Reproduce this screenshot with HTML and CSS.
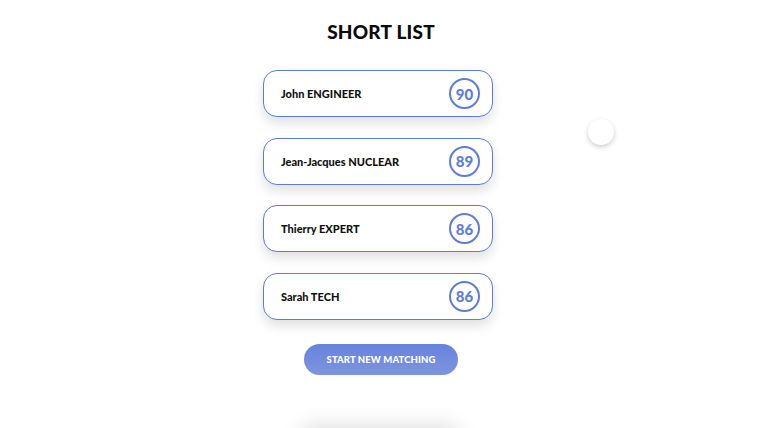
FILE: index.html
```html
<!DOCTYPE html>
<html>
<head>
<meta charset="utf-8">
<link rel="stylesheet" href="styles.css">
</head>
<body>
<main class="page">
  <h1 class="title">SHORT LIST</h1>
  <ul class="list">
    <li class="card"><span class="name">John ENGINEER</span><span class="score">90</span></li>
    <li class="card"><span class="name">Jean-Jacques NUCLEAR</span><span class="score">89</span></li>
    <li class="card"><span class="name">Thierry EXPERT</span><span class="score">86</span></li>
    <li class="card"><span class="name">Sarah TECH</span><span class="score">86</span></li>
  </ul>
  <button class="cta">START NEW MATCHING</button>
</main>
<div class="toggle"></div>
<div class="peek"><div class="peek-card"></div></div>
</body>
</html>
```
FILE: styles.css
```css
html, body {
  margin: 0;
  padding: 0;
  background: #ffffff;
  width: 762px;
  height: 428px;
  overflow: hidden;
  position: relative;
  font-family: "Lato", "DejaVu Sans", sans-serif;
}
.page {
  display: flex;
  flex-direction: column;
  align-items: center;
  padding-top: 19px;
}
.title {
  margin: 0;
  font-size: 19px;
  font-weight: 900;
  line-height: 26px;
  letter-spacing: 0.2px;
  color: #0b0b0b;
}
.list {
  list-style: none;
  margin: 25px 6px 0 0;
  padding: 0;
  display: flex;
  flex-direction: column;
  gap: 20.5px;
}
.card {
  box-sizing: border-box;
  width: 230px;
  height: 47px;
  border: 1px solid #5d7bd8;
  border-radius: 14px;
  background: #fff;
  box-shadow: 0 6px 12px rgba(0,0,0,0.12);
  display: flex;
  align-items: center;
  justify-content: space-between;
  padding: 0 12px 0 17px;
}
.name {
  font-size: 11px;
  font-weight: 900;
  color: #111;
}
.score {
  box-sizing: border-box;
  width: 31px;
  height: 31px;
  border: 2px solid #5e7cd8;
  border-radius: 50%;
  display: flex;
  align-items: center;
  justify-content: center;
  font-size: 15px;
  font-weight: 900;
  color: #5e7cd8;
}
.cta {
  margin-top: 24px;
  width: 154px;
  height: 31px;
  border: none;
  border-radius: 16px;
  background: linear-gradient(180deg, #6683dd 0%, #7e94dd 100%);
  color: #fff;
  font-family: inherit;
  font-size: 9.5px;
  font-weight: 900;
  letter-spacing: 0.1px;
  padding: 0;
}
.toggle {
  position: absolute;
  left: 588px;
  top: 119px;
  width: 26px;
  height: 26px;
  border-radius: 50%;
  background: #fff;
  box-shadow: 0 2px 5px rgba(0,0,0,0.2);
}
.peek {
  position: absolute;
  left: 250px;
  bottom: 0;
  width: 260px;
  height: 34px;
  overflow: hidden;
}
.peek-card {
  margin: 34px 0 0 50px;
  width: 160px;
  height: 40px;
  border-radius: 14px;
  background: #fff;
  box-shadow: 0 -3px 20px rgba(0,0,0,0.13);
}
```
